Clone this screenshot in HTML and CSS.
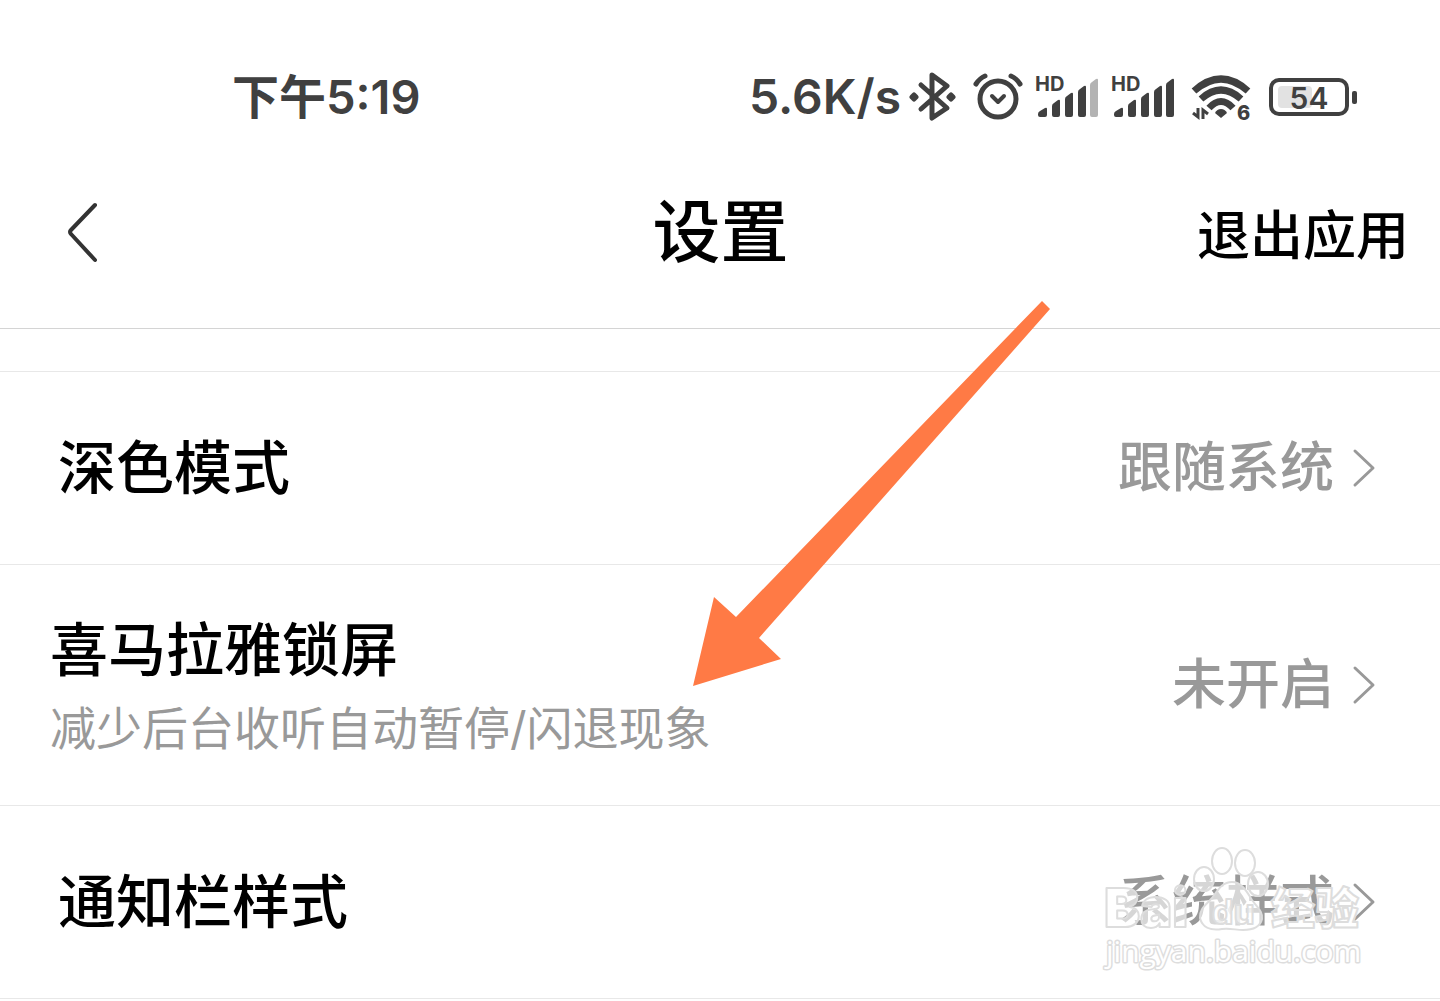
FILE: index.html
```html
<!DOCTYPE html>
<html lang="zh-CN">
<head>
    <meta charset="UTF-8">
    <meta name="viewport" content="width=device-width, initial-scale=1.0">
    <title>设置</title>
    <link rel="stylesheet" href="styles.css">
</head>
<body>

    <div class="status-bar">
        <span class="status-time">下午5:19</span>
        <div class="status-right">
            <span class="speed">5.6K/s</span>
            <svg class="bluetooth" width="48" height="52" viewBox="0 0 48 52" fill="none" stroke="#404040" stroke-width="5" stroke-linecap="round" stroke-linejoin="round" aria-hidden="true">
                <path d="M12 14 38 37 23 47V4L38 15 12 38"/>
                <path d="M5 24l2 2-2 2-2-2zM42 24l2 2-2 2-2-2z"/>
            </svg>
            <svg class="alarm" width="50" height="52" viewBox="0 0 50 52" fill="none" stroke="#404040" stroke-width="5" stroke-linecap="round" stroke-linejoin="round" aria-hidden="true">
                <circle cx="25" cy="28" r="18"/>
                <path d="M19 25l6 6 6-6" stroke-width="4"/>
                <path d="M3 13q4-6 9-8M38 5q5 2 9 8"/>
            </svg>
            <svg class="signal" width="64" height="52" viewBox="0 0 64 52" fill="#404040" aria-hidden="true">
                <text class="hd" x="0" y="20">HD</text>
                <path d="M3 43q0-2 2-3l5-3q2-1 2 1v6q0 2-2 2H5q-2 0-2-2z"/>
                <path d="M17 35q0-2 2-3l4-3q2-1 2 1v14q0 2-2 2h-4q-2 0-2-2z"/>
                <path d="M30 28q0-2 2-3l4-3q2-1 2 1v21q0 2-2 2h-4q-2 0-2-2z"/>
                <path d="M43 21q0-2 2-3l4-3q2-1 2 1v28q0 2-2 2h-4q-2 0-2-2z"/>
                <path fill="#b3b3b3" d="M55 14q0-2 2-3l4-3q2-1 2 1v35q0 2-2 2h-4q-2 0-2-2z"/>
            </svg>
            <svg class="signal" width="64" height="52" viewBox="0 0 64 52" fill="#404040" aria-hidden="true">
                <text class="hd" x="0" y="20">HD</text>
                <path d="M3 43q0-2 2-3l5-3q2-1 2 1v6q0 2-2 2H5q-2 0-2-2z"/>
                <path d="M17 35q0-2 2-3l4-3q2-1 2 1v14q0 2-2 2h-4q-2 0-2-2z"/>
                <path d="M30 28q0-2 2-3l4-3q2-1 2 1v21q0 2-2 2h-4q-2 0-2-2z"/>
                <path d="M43 21q0-2 2-3l4-3q2-1 2 1v28q0 2-2 2h-4q-2 0-2-2z"/>
                <path d="M55 14q0-2 2-3l4-3q2-1 2 1v35q0 2-2 2h-4q-2 0-2-2z"/>
            </svg>
            <svg class="wifi" width="62" height="52" viewBox="0 0 62 52" fill="none" stroke="#404040" stroke-width="7" aria-hidden="true">
                <path d="M3 20q27-24 54 0M10 28q20-18 40 0M18 37q12-13 24 0"/>
                <path d="M30 38q4 0 6 4l-6 5-6-5q2-4 6-4z" fill="#404040" stroke="none"/>
                <path d="M7 37v9l-5-4M12 48v-9l5 4" stroke-width="3"/>
                <text class="wifi-six" x="46" y="49">6</text>
            </svg>
            <div class="battery">
                <div class="battery-body"><span class="battery-level"></span><span class="battery-text">54</span></div>
                <span class="battery-cap"></span>
            </div>
        </div>
    </div>

    <header class="nav">
        <button class="back" type="button" aria-label="返回">
            <svg width="36" height="64" viewBox="0 0 36 64" fill="none" stroke="#333" stroke-width="4" stroke-linecap="round" stroke-linejoin="round">
                <path d="M31 5 7 30q-2 2 0 4l24 26"/>
            </svg>
        </button>
        <h1>设置</h1>
        <button class="exit" type="button">退出应用</button>
    </header>

    <main class="list">
        <a class="row" href="#dark-mode">
            <span class="label">深色模式</span>
            <span class="value">跟随系统</span>
            <svg class="arrow" width="24" height="40" viewBox="0 0 24 40"><path d="M3 3l18 17L3 37"/></svg>
        </a>
        <a class="row row-lock" href="#lock-screen">
            <span class="label">喜马拉雅锁屏<small>减少后台收听自动暂停/闪退现象</small></span>
            <span class="value">未开启</span>
            <svg class="arrow" width="24" height="40" viewBox="0 0 24 40"><path d="M3 3l18 17L3 37"/></svg>
        </a>
        <a class="row" href="#notification">
            <span class="label">通知栏样式</span>
            <span class="value">系统样式</span>
            <svg class="arrow" width="24" height="40" viewBox="0 0 24 40"><path d="M3 3l18 17L3 37"/></svg>
        </a>
    </main>

    <svg class="pointer" width="360" height="387" viewBox="0 0 360 387" aria-hidden="true">
        <path fill="#ff7a45" d="M350 1l8 8L67 338l22 21L1 386l21-89 22 20z"/>
    </svg>

    <svg class="watermark" width="272" height="136" viewBox="0 0 272 136" aria-hidden="true">
        <g class="mark">
            <text class="mark-name" x="4" y="86">Bai</text>
            <ellipse cx="122" cy="20" rx="10" ry="13"/>
            <ellipse cx="145" cy="22" rx="10" ry="13"/>
            <ellipse cx="104" cy="38" rx="10" ry="12"/>
            <ellipse cx="158" cy="43" rx="10" ry="12"/>
            <path d="M132 41c10 0 15 10 20 18 6 8 11 12 10 19-2 9-10 11-19 11-7 0-13-2-21-1-12 2-20-2-22-11-1-9 6-13 12-20 6-8 10-16 20-16z"/>
            <text class="mark-du" x="112" y="83">du</text>
            <text class="mark-cn" x="171" y="84">经验</text>
            <text class="mark-url" x="6" y="121">jingyan.baidu.com</text>
        </g>
    </svg>

</body>
</html>
```
FILE: styles.css
```css
* {
    box-sizing: border-box;
}

body {
    position: relative;
    margin: 0;
    background: #fff;
    color: #000;
    font-family: Inter, "Noto Sans CJK SC", sans-serif;
    font-weight: 500;
}

button {
    padding: 0;
    border: none;
    background: none;
    color: inherit;
    font: inherit;
    cursor: pointer;
}

svg {
    display: block;
    flex: none;
}

.status-bar {
    display: flex;
    justify-content: space-between;
    align-items: center;
    height: 136px;
    padding: 58px 83px 0 232px;
    color: #404040;
    font-size: 48px;
    font-weight: 600;
    line-height: 76px;
}

.status-time {
    font-size: 47px;
}

.status-right {
    display: flex;
    align-items: center;
}

.bluetooth {
    margin-left: 8px;
}

.alarm {
    margin-left: 16px;
}

.signal {
    margin-left: 12px;
}

.wifi {
    margin-left: 16px;
}

.hd {
    font-size: 20px;
    font-weight: 700;
}

.wifi-six {
    fill: #404040;
    stroke: none;
    font-size: 20px;
    font-weight: 800;
}

.battery {
    display: flex;
    align-items: center;
    gap: 3px;
    margin-left: 16px;
}

.battery-body {
    position: relative;
    width: 80px;
    height: 38px;
    border: 4px solid #404040;
    border-radius: 10px;
    font-size: 30px;
    line-height: 32px;
    text-align: center;
}

.battery-level {
    position: absolute;
    top: 4px;
    left: 5px;
    width: 34px;
    height: 22px;
    border-radius: 4px;
    background: #e2e2e2;
}

.battery-text {
    position: relative;
}

.battery-cap {
    width: 5px;
    height: 13px;
    border-radius: 2px;
    background: #404040;
}

.nav {
    display: grid;
    grid-template-columns: 1fr auto 1fr;
    align-items: center;
    height: 193px;
    padding: 0 31px 0 64px;
    border-bottom: 1px solid #d4d4d4;
}

.nav h1 {
    margin: 0 0 0 -32px;
    font-size: 68px;
    font-weight: 500;
    line-height: 96px;
}

.back {
    justify-self: start;
}

.exit {
    justify-self: end;
    font-size: 53px;
}

.list {
    margin-top: 42px;
    border-top: 1px solid #e8e8e8;
}

.row {
    display: flex;
    align-items: center;
    min-height: 193px;
    padding: 0 64px 0 58px;
    border-bottom: 1px solid #e8e8e8;
    color: #000;
    text-decoration: none;
}

.row-lock {
    min-height: 241px;
    padding-left: 50px;
}

.label {
    flex: 1;
    font-size: 58px;
    line-height: 86px;
}

.label small {
    display: block;
    color: #999;
    font-size: 46px;
    font-weight: 400;
    line-height: 70px;
}

.value {
    color: #999;
    font-size: 54px;
    line-height: 80px;
}

.arrow {
    margin-left: 18px;
    fill: none;
    stroke: #999;
    stroke-width: 3;
    stroke-linecap: round;
    stroke-linejoin: round;
}

.pointer {
    position: absolute;
    top: 300px;
    left: calc(50% - 28px);
}

.watermark {
    position: absolute;
    top: 841px;
    right: 68px;
}

.mark {
    fill: rgba(255, 255, 255, 0.6);
    stroke: #ddd;
    stroke-width: 2;
    stroke-linejoin: round;
}

.mark-name {
    font-size: 54px;
    font-weight: 900;
}

.mark-du {
    font-size: 34px;
    font-weight: 700;
}

.mark-cn {
    font-family: "Noto Sans CJK SC", sans-serif;
    font-size: 44px;
    font-weight: 900;
}

/* white letters laid over a thin grey outline */
.mark-url {
    fill: #fff;
    stroke: #ddd;
    stroke-width: 3;
    paint-order: stroke;
    font-family: "Open Sans", sans-serif;
    font-size: 30px;
    font-weight: 400;
}
```
